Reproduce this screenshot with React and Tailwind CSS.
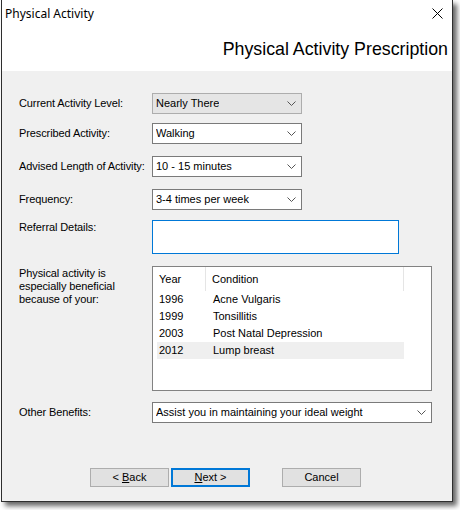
const SANS = { fontFamily: '"Liberation Sans", Arial, sans-serif' };

function Chevron() {
  return (
    <svg width="9" height="5" viewBox="0 0 9 5" className="shrink-0">
      <path d="M0.5 0.5 L4.5 4.5 L8.5 0.5" fill="none" stroke="#555" strokeWidth="1" />
    </svg>
  );
}

function Combo({ value, width, disabled }) {
  return (
    <div
      className={
        "h-[21px] flex items-center justify-between pl-[3px] pr-[5px] border text-[11px] text-black " +
        (disabled ? "bg-[#e5e5e5] border-[#adadad]" : "bg-white border-[#7a7a7a]")
      }
      style={{ width }}
    >
      <span className="truncate">{value}</span>
      <Chevron />
    </div>
  );
}

function Row({ label, children, className = "" }) {
  return (
    <div className={"flex items-center " + className}>
      <div className="w-[133px] shrink-0 text-[11px] tracking-[-0.1px]">{label}</div>
      {children}
    </div>
  );
}

function Button({ children, active }) {
  return (
    <button
      className={
        "w-[79px] h-[19px] flex items-center justify-center bg-[#e1e1e1] text-[11px] text-black " +
        (active ? "border-2 border-[#0078d7]" : "border border-[#adadad]")
      }
    >
      {children}
    </button>
  );
}

const conditions = [
  ["1996", "Acne Vulgaris"],
  ["1999", "Tonsillitis"],
  ["2003", "Post Natal Depression"],
  ["2012", "Lump breast"],
];

export default function App() {
  return (
    <div className="w-[460px] h-[510px] bg-white overflow-hidden" style={SANS}>
      <div className="ml-px w-[452px] h-[502px] border-x border-b border-[#2e2e2e] bg-[#f0f0f0] shadow-[4px_4px_5px_rgba(0,0,0,0.6)] flex flex-col">
        {/* title + header */}
        <div className="bg-white h-[71px] flex flex-col">
          <div className="h-[27px] flex items-center justify-between pl-[3px] pr-[9px]">
            <span className="text-[12px] text-black" style={{ fontFamily: '"Noto Sans", "Open Sans", sans-serif' }}>
              Physical Activity
            </span>
            <svg width="11" height="11" viewBox="0 0 11 11">
              <path d="M0.5 0.5 L10.5 10.5 M10.5 0.5 L0.5 10.5" stroke="#000" strokeWidth="1" />
            </svg>
          </div>
          <div className="flex-1 flex items-center justify-end pr-[4px]">
            <span className="text-[17.8px] text-black">Physical Activity Prescription</span>
          </div>
        </div>

        {/* form */}
        <div className="pl-[17px] flex flex-col">
          <Row label="Current Activity Level:" className="mt-[22px]">
            <Combo value="Nearly There" width={150} disabled />
          </Row>
          <Row label="Prescribed Activity:" className="mt-[9px]">
            <Combo value="Walking" width={150} />
          </Row>
          <Row label="Advised Length of Activity:" className="mt-[12px]">
            <Combo value="10 - 15 minutes" width={150} />
          </Row>
          <Row label="Frequency:" className="mt-[12px]">
            <Combo value="3-4 times per week" width={150} />
          </Row>

          <div className="flex items-start mt-[10px]">
            <div className="w-[133px] shrink-0 text-[11px] tracking-[-0.1px] pt-[1px] leading-[13px]">Referral Details:</div>
            <div className="w-[247px] h-[34px] bg-white border border-[#0078d7]" />
          </div>

          <div className="flex items-start mt-[12px]">
            <div className="w-[133px] shrink-0 text-[11px] tracking-[-0.1px] pt-[1px] leading-[13px]">
              Physical activity is
              <br />
              especially beneficial
              <br />
              because of your:
            </div>
            <div className="w-[280px] h-[125px] bg-white border border-[#828282] text-[11px] flex flex-col">
              <div className="h-[24px] flex shrink-0">
                <div className="w-[53px] pl-[6px] flex items-center border-r border-[#e5e5e5]">Year</div>
                <div className="w-[198px] pl-[6px] flex items-center border-r border-[#e5e5e5]">Condition</div>
              </div>
              <div className="flex flex-col pl-[4px]">
                {conditions.map(([year, cond], i) => (
                  <div
                    key={year}
                    className={"w-[247px] h-[17px] flex items-center " + (i === 3 ? "bg-[#efefef]" : "")}
                  >
                    <span className="w-[54px] pl-[2px]">{year}</span>
                    <span className="pl-[2px]">{cond}</span>
                  </div>
                ))}
              </div>
            </div>
          </div>

          <Row label="Other Benefits:" className="mt-[11px]">
            <Combo value="Assist you in maintaining your ideal weight" width={280} />
          </Row>
        </div>

        {/* buttons */}
        <div className="flex mt-[45px] pl-[88px]">
          <Button>
            &lt; <span className="underline ml-[3px]">B</span>ack
          </Button>
          <div className="ml-[2px]">
            <Button active>
              <span className="underline">N</span>ext &gt;
            </Button>
          </div>
          <div className="ml-[32px]">
            <Button>Cancel</Button>
          </div>
        </div>
      </div>
    </div>
  );
}
